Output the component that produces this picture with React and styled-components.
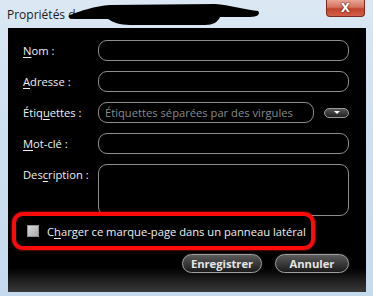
import styled, { createGlobalStyle } from 'styled-components';

const GlobalStyle = createGlobalStyle`
  html, body {
    margin: 0;
    padding: 0;
    width: 373px;
    height: 296px;
    overflow: hidden;
  }
  body {
    font-family: 'Open Sans', 'Noto Sans', sans-serif;
  }
`;

const Window = styled.div`
  width: 373px;
  height: 296px;
  display: flex;
  flex-direction: column;
  background: linear-gradient(to bottom, #dbe8f4 0%, #cfe0f0 40%, #c6daee 100%);
  box-sizing: border-box;
`;

const TitleBar = styled.div`
  position: relative;
  height: 28px;
  flex: none;
  display: flex;
  align-items: center;
  padding-left: 7px;
`;

const Title = styled.span`
  font-size: 12px;
  color: #1a1a1a;
  margin-top: 1px;
`;

const Scribble = styled.svg`
  position: absolute;
  left: 60px;
  top: 0;
`;

const CloseButton = styled.div`
  position: absolute;
  right: 8px;
  top: 0;
  width: 39px;
  height: 17px;
  box-sizing: border-box;
  border: 1px solid #7a2a1e;
  border-top: none;
  border-radius: 0 0 4px 4px;
  background: linear-gradient(to bottom, #e8a594 0%, #d6735d 45%, #c2432b 55%, #d2604a 100%);
  display: flex;
  align-items: center;
  justify-content: center;
  color: #fff;
  font-family: 'DejaVu Sans', sans-serif;
  font-weight: bold;
  font-size: 12px;
  text-shadow: 0 0 2px #5a1a10, 0 0 1px #5a1a10;
`;

const Body = styled.div`
  flex: 1;
  margin: 0 7px 4px 8px;
  padding: 12px 17px 0 15px;
  background: linear-gradient(to bottom, #000 0%, #000 calc(100% - 24px), #3a3a3a 100%);
  display: flex;
  flex-direction: column;
`;

const Form = styled.div`
  display: grid;
  grid-template-columns: 75px 1fr;
  row-gap: 10px;
  align-items: center;
`;

const Label = styled.label`
  color: #f0f0f0;
  font-size: 11.2px;
  align-self: ${({ $top }) => ($top ? 'start' : 'center')};
  padding-top: ${({ $top }) => ($top ? '3px' : '0')};
  white-space: nowrap;
`;

const Key = styled.span`
  text-decoration: underline;
  text-underline-offset: 2px;
`;

const Field = styled.div`
  height: ${({ $tall }) => ($tall ? '52px' : '21px')};
  box-sizing: border-box;
  border: 1px solid #8c8c8c;
  border-radius: 9px;
  background: #000;
  display: flex;
  align-items: center;
  padding-left: 6px;
  font-size: 11.2px;
  color: #8a8a8a;
  flex: 1;
`;

const FieldRow = styled.div`
  display: flex;
  align-items: center;
  gap: 10px;
`;

const Toggle = styled.div`
  width: 25px;
  height: 10px;
  box-sizing: border-box;
  border: 1px solid #9a9a9a;
  border-radius: 6px;
  background: linear-gradient(to bottom, #555 0%, #222 100%);
  display: flex;
  align-items: center;
  justify-content: center;

  &::after {
    content: '';
    width: 0;
    height: 0;
    border-left: 3px solid transparent;
    border-right: 3px solid transparent;
    border-top: 3px solid #fff;
  }
`;

const Highlight = styled.div`
  margin: -4px 0 0 -11px;
  width: 303px;
  height: 38px;
  box-sizing: border-box;
  border: 4px solid #ff0a0a;
  border-radius: 11px;
  box-shadow: 0 0 2px #ff2020;
  display: flex;
  align-items: center;
  padding-left: 11px;
  gap: 8px;
  position: relative;
`;

const Checkbox = styled.span`
  width: 12px;
  height: 12px;
  box-sizing: border-box;
  border: 1px solid #8f8f8f;
  background: linear-gradient(135deg, #d8d8d8 0%, #bdbdbd 60%, #a9a9a9 100%);
`;

const CheckText = styled.span`
  color: #f0f0f0;
  font-size: 11.2px;
  white-space: nowrap;
`;

const Buttons = styled.div`
  display: flex;
  justify-content: flex-end;
  gap: 13px;
  margin-top: 4px;
`;

const Button = styled.div`
  width: ${({ $w }) => $w}px;
  height: 19px;
  box-sizing: border-box;
  border: 1px solid #a0a0a0;
  border-radius: 10px;
  background: linear-gradient(to bottom, #5c5c5c 0%, #3a3a3a 50%, #1c1c1c 100%);
  box-shadow: 0 0 0 1px #111, 0 0 3px #000;
  display: flex;
  align-items: center;
  justify-content: center;
  color: #e6e6e6;
  font-size: 11.2px;
  font-weight: 700;
`;

export default function App() {
  return (
    <>
      <GlobalStyle />
      <Window>
        <TitleBar>
          <Title>Propriétés de</Title>
          <Scribble width="210" height="28" viewBox="0 0 210 28">
            <path
              fill="#000"
              d="M10 15 C20 11 35 6 50 5 L155 4 C170 5 182 9 198 11 C201 14 197 17 190 17 L160 17 C158 22 153 25 145 25 L70 25 C60 25 52 22 48 19 L15 19 C9 19 7 16 10 15 Z"
            />
          </Scribble>
          <CloseButton>X</CloseButton>
        </TitleBar>
        <Body>
          <Form>
            <Label>
              <Key>N</Key>om :
            </Label>
            <Field />
            <Label>
              <Key>A</Key>dresse :
            </Label>
            <Field />
            <Label>
              Étiq<Key>u</Key>ettes :
            </Label>
            <FieldRow>
              <Field>Étiquettes séparées par des virgules</Field>
              <Toggle />
            </FieldRow>
            <Label>
              <Key>M</Key>ot-clé :
            </Label>
            <Field />
            <Label $top>
              Des<Key>c</Key>ription :
            </Label>
            <Field $tall />
          </Form>
          <Highlight>
            <Checkbox />
            <CheckText>
              C<Key>h</Key>arger ce marque-page dans un panneau latéral
            </CheckText>
          </Highlight>
          <Buttons>
            <Button $w={80}>Enregistrer</Button>
            <Button $w={74}>Annuler</Button>
          </Buttons>
        </Body>
      </Window>
    </>
  );
}
